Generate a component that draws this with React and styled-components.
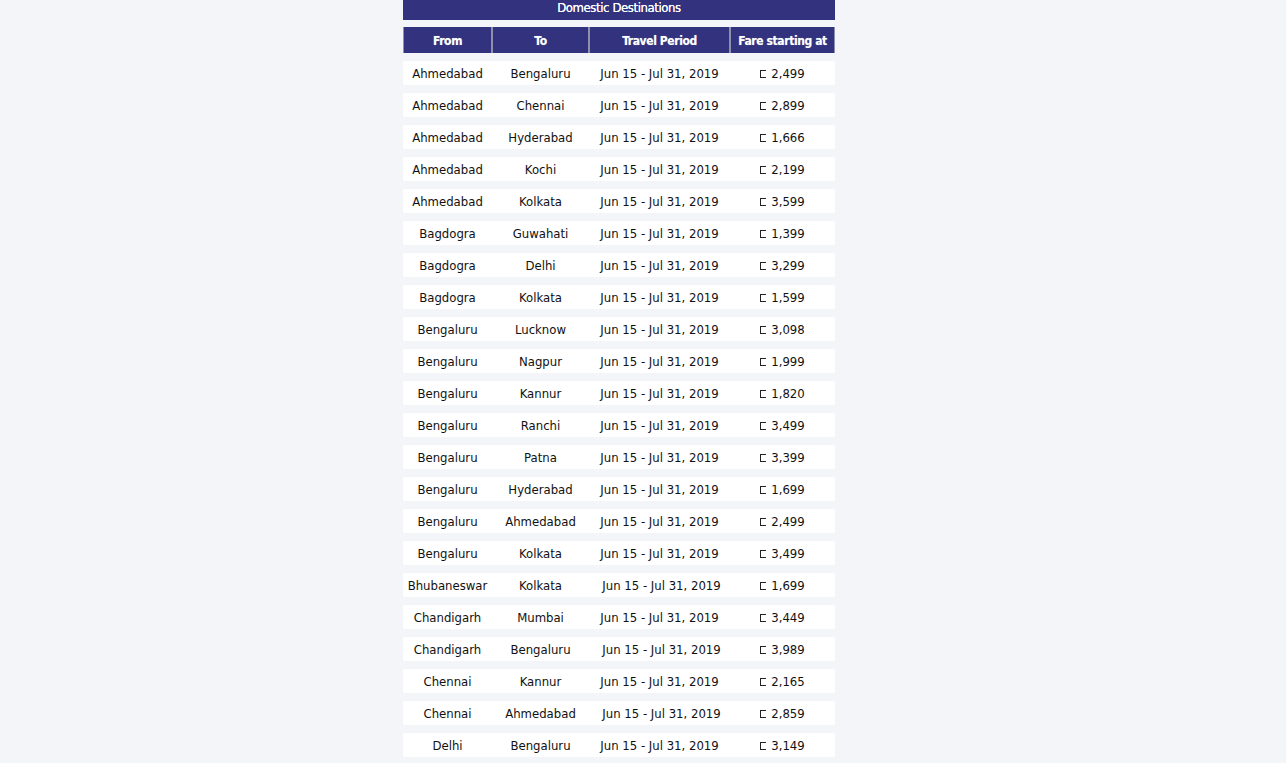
import React from 'react';
import styled, {createGlobalStyle} from 'styled-components';

const rows = [
  ['Ahmedabad', 'Bengaluru', '2,499'],
  ['Ahmedabad', 'Chennai', '2,899'],
  ['Ahmedabad', 'Hyderabad', '1,666'],
  ['Ahmedabad', 'Kochi', '2,199'],
  ['Ahmedabad', 'Kolkata', '3,599'],
  ['Bagdogra', 'Guwahati', '1,399'],
  ['Bagdogra', 'Delhi', '3,299'],
  ['Bagdogra', 'Kolkata', '1,599'],
  ['Bengaluru', 'Lucknow', '3,098'],
  ['Bengaluru', 'Nagpur', '1,999'],
  ['Bengaluru', 'Kannur', '1,820'],
  ['Bengaluru', 'Ranchi', '3,499'],
  ['Bengaluru', 'Patna', '3,399'],
  ['Bengaluru', 'Hyderabad', '1,699'],
  ['Bengaluru', 'Ahmedabad', '2,499'],
  ['Bengaluru', 'Kolkata', '3,499'],
  ['Bhubaneswar', 'Kolkata', '1,699', true],
  ['Chandigarh', 'Mumbai', '3,449'],
  ['Chandigarh', 'Bengaluru', '3,989', true],
  ['Chennai', 'Kannur', '2,165'],
  ['Chennai', 'Ahmedabad', '2,859', true],
  ['Delhi', 'Bengaluru', '3,149'],
];

const App = () => {
  return (
    <>
      <GlobalStyle />
      <StyledPage>
        <StyledTable>
          <StyledCaption>Domestic Destinations</StyledCaption>
          <StyledHead>
            <StyledHeadCell>From</StyledHeadCell>
            <StyledHeadCell>To</StyledHeadCell>
            <StyledHeadCell>Travel Period</StyledHeadCell>
            <StyledHeadCell>Fare starting at</StyledHeadCell>
          </StyledHead>
          {rows.map(([from, to, fare, shifted], i) => (
            <StyledRow key={i}>
              <StyledCell>{from}</StyledCell>
              <StyledCell>{to}</StyledCell>
              <StyledCell $shift={shifted}>Jun 15 - Jul 31, 2019</StyledCell>
              <StyledCell>
                <StyledRupee />
                {fare}
              </StyledCell>
            </StyledRow>
          ))}
        </StyledTable>
      </StyledPage>
    </>
  );
};

const GlobalStyle = createGlobalStyle`
  body {
    margin: 0;
    background: #f4f5f9;
    font-family: "DejaVu Sans Condensed", "DejaVu Sans", Verdana, sans-serif;
    font-stretch: condensed;
  }
`;

const StyledPage = styled.div`
  display: flex;
  justify-content: center;
  padding-right: 48px;
  min-height: 100vh;
`;

const StyledTable = styled.div`
  width: 432px;
  display: flex;
  flex-direction: column;
  gap: 8px;
`;

const StyledCaption = styled.div`
  height: 20px;
  background: #32327e;
  color: #fff;
  font-size: 13px;
  line-height: 16px;
  letter-spacing: -0.4px;
  text-align: center;
  margin-bottom: -1px;
  text-shadow: 0 0 0.6px #fff;
`;

const StyledHead = styled.div`
  display: grid;
  grid-template-columns: 89px 97px 141px 105px;
  height: 26px;
  background: #32327e;
`;

const StyledHeadCell = styled.div`
  display: flex;
  align-items: center;
  justify-content: center;
  padding-top: 2px;
  color: #fff;
  font-size: 12px;
  font-weight: bold;
  letter-spacing: -0.4px;
  border-left: 1px solid #8e90ad;
  border-right: 1px solid #8e90ad;
  text-shadow: 0 0 1px rgba(255, 255, 255, 0.4);
`;

const StyledRow = styled.div`
  display: grid;
  grid-template-columns: 89px 97px 141px 105px;
  height: 24px;
  background: #fff;
  border-radius: 2px;
`;

const StyledCell = styled.div`
  display: flex;
  align-items: center;
  justify-content: center;
  color: #111;
  font-size: 13px;
  white-space: nowrap;
  padding-left: ${p => (p.$shift ? '4px' : '0')};
`;

const StyledRupee = styled.span`
  display: inline-block;
  width: 5px;
  height: 6px;
  border: 1px solid #222;
  border-right: none;
  margin-right: 5px;
  margin-top: 2px;
`;

export default App;
